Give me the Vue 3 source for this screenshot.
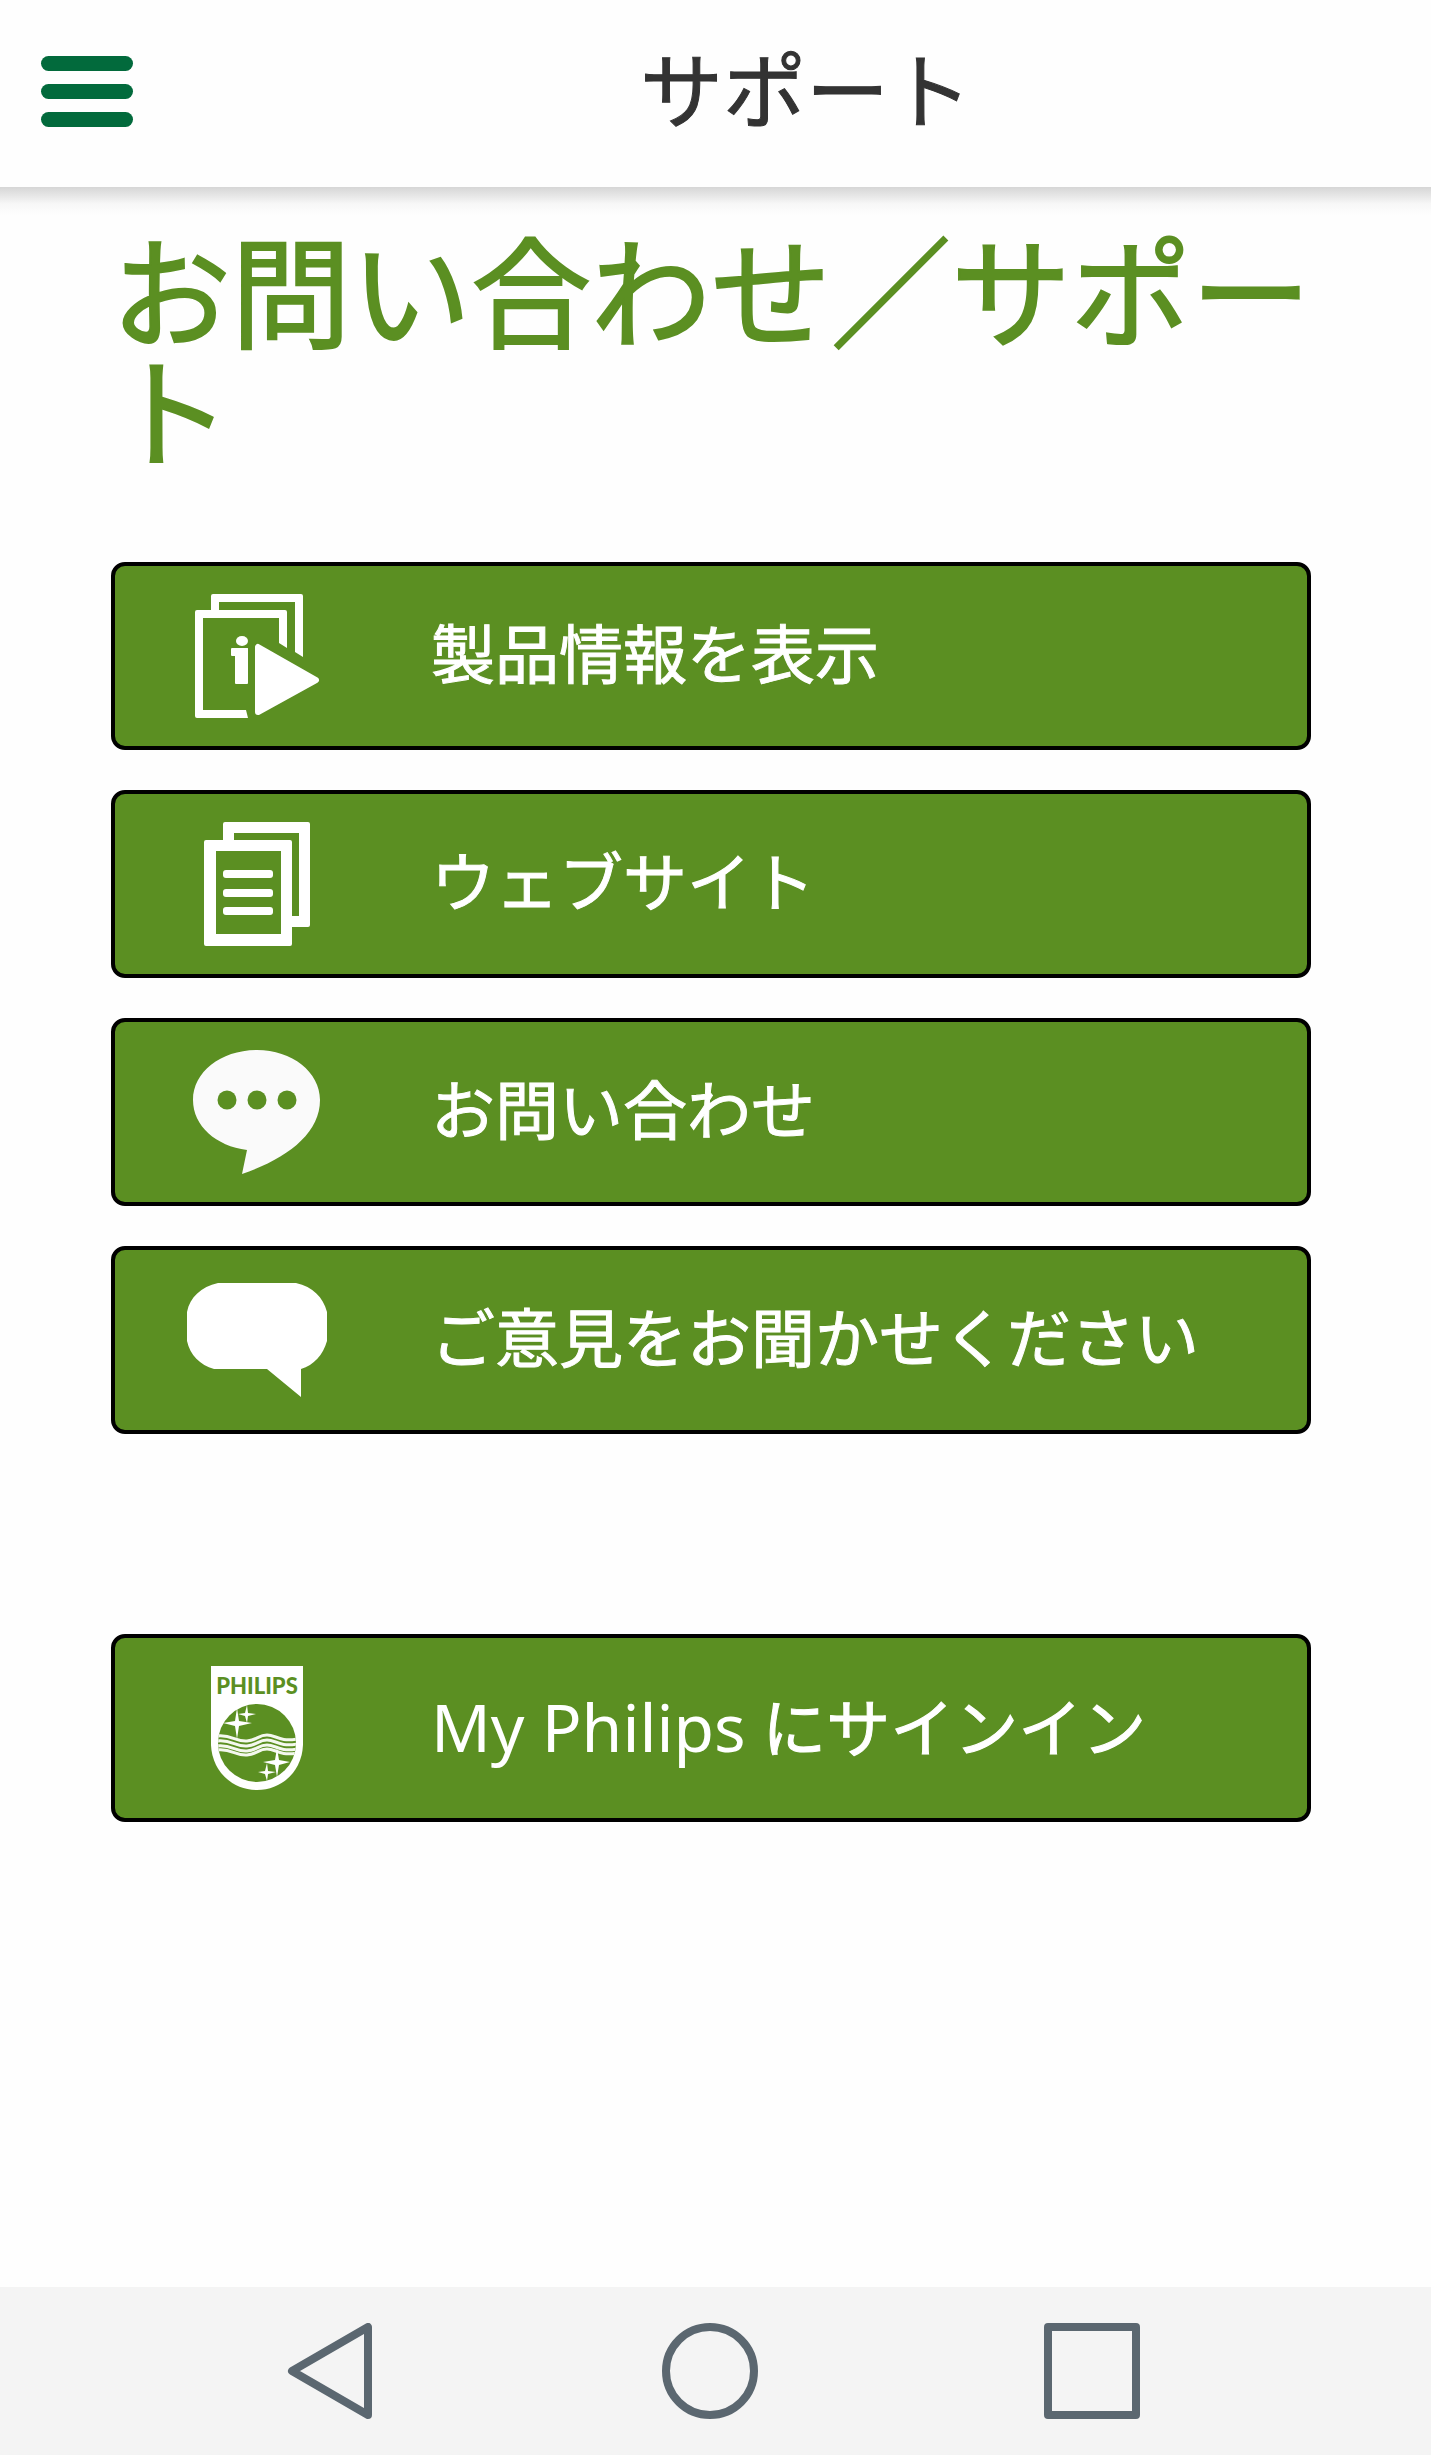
<template>
  <div class="screen">
    <header class="app-bar">
      <button class="menu-button" type="button" aria-label="メニュー">
        <span class="menu-line" />
        <span class="menu-line" />
        <span class="menu-line" />
      </button>
      <div class="app-title">サポート</div>
    </header>

    <main class="content">
      <h1 class="heading">お問い合わせ／サポート</h1>

      <nav class="actions">
        <button
          v-for="item in items"
          :key="item.icon"
          class="action"
          :class="{ separated: item.separated }"
          type="button"
        >
          <span class="action-icon">
            <svg viewBox="0 0 140 124" aria-hidden="true">
              <g v-if="item.icon === 'product'" fill="#fff">
                <path d="M24 17V2q0-2 2-2H114q2 0 2 2V63L108 58V8H32V17Z" />
                <path d="M8 18q0-2 2-2H98q2 0 2 2V54L92 49V24H16V116H59L61 124H10q-2 0-2-2Z" />
                <ellipse cx="55" cy="47" rx="6" ry="5" />
                <rect x="44" y="54" width="17" height="8" rx="1" />
                <rect x="48" y="54" width="13" height="36" rx="1" />
                <path
                  d="M71 53V118L129 86Z"
                  stroke="#fff"
                  stroke-width="6"
                  stroke-linejoin="round"
                />
              </g>
              <g v-else-if="item.icon === 'website'" fill="#fff">
                <path d="M36 20V2q0-2 2-2H121q2 0 2 2V103q0 2-2 2H104V94H112V11H47V20Z" />
                <path
                  fill-rule="evenodd"
                  d="M19 18H103q2 0 2 2V122q0 2-2 2H19q-2 0-2-2V20q0-2 2-2ZM29 29V112H94V29Z"
                />
                <rect x="36" y="48" width="50" height="8" rx="3" />
                <rect x="36" y="67" width="50" height="8" rx="3" />
                <rect x="36" y="85" width="50" height="8" rx="3" />
              </g>
              <g v-else-if="item.icon === 'contact'">
                <path
                  fill="#fafafa"
                  d="M70 0C105 0 133 22 133 50C133 84 99 109 55 124L60 100C29 96 6 76 6 50C6 22 34 0 70 0Z"
                />
                <circle cx="40" cy="50" r="9.5" fill="#5b8f22" />
                <circle cx="70" cy="50" r="9.5" fill="#5b8f22" />
                <circle cx="100" cy="50" r="9.5" fill="#5b8f22" />
              </g>
              <g v-else-if="item.icon === 'feedback'" fill="#fff">
                <path
                  d="M31 5H109C126 9 136 19 140 34V63C136 77 127 87 114 91V119L80 91H27C13 87 3 77 0 63V34C3 19 14 9 31 5Z"
                />
              </g>
              <g v-else>
                <clipPath id="emblem">
                  <circle cx="70" cy="77" r="39" />
                </clipPath>
                <path fill="#fff" d="M24 0H116V79C115 105 95 124 70 124S25 105 24 79Z" />
                <text x="70" y="28" class="shield-text">PHILIPS</text>
                <circle cx="70" cy="77" r="39" fill="#5b8f22" />
                <g clip-path="url(#emblem)" fill="none" stroke="#f4f8ee" stroke-width="3">
                  <path
                    v-for="y in [0, 5, 10, 14]"
                    :key="y"
                    :transform="`translate(0 ${y})`"
                    d="M30 70C44 68 49 76 60 75S71 69 80 69S92 76 110 73"
                  />
                </g>
                <g fill="#fff">
                  <path d="M50 42L52 55L65 57L52 60L50 73L48 60L36 57L48 55Z" />
                  <path d="M60 39L61 47L69 48L61 50L60 57L58 50L51 48L58 47Z" />
                  <path d="M90 82L92 94L103 96L92 99L90 111L88 99L76 96L88 94Z" />
                  <path d="M80 97L81 105L89 106L81 108L80 115L78 108L71 106L78 105Z" />
                </g>
              </g>
            </svg>
          </span>
          <span class="action-label"><span v-if="item.brand" class="brand">{{ item.brand }}</span>{{ item.label }}</span>
        </button>
      </nav>
    </main>

    <footer class="system-bar">
      <button class="system-button" type="button" aria-label="戻る">
        <svg viewBox="0 0 96 96" aria-hidden="true">
          <path d="M12 48L88 4V92Z" />
        </svg>
      </button>
      <button class="system-button" type="button" aria-label="ホーム">
        <svg viewBox="0 0 96 96" aria-hidden="true">
          <circle cx="48" cy="48" r="44" />
        </svg>
      </button>
      <button class="system-button" type="button" aria-label="履歴">
        <svg viewBox="0 0 96 96" aria-hidden="true">
          <rect x="4" y="4" width="88" height="88" />
        </svg>
      </button>
    </footer>
  </div>
</template>

<script setup>
const items = [
  { icon: 'product', label: '製品情報を表示' },
  { icon: 'website', label: 'ウェブサイト' },
  { icon: 'contact', label: 'お問い合わせ' },
  { icon: 'feedback', label: 'ご意見をお聞かせください' },
  { icon: 'account', brand: 'My Philips', label: ' にサインイン', separated: true },
];
</script>

<style>
body {
  margin: 0;
  background-color: #fefefe;
}
</style>

<style scoped>
.screen {
  display: flex;
  flex-direction: column;
  min-height: 100vh;
  font-family: "Noto Sans", "Noto Sans CJK JP", sans-serif;
}

button {
  margin: 0;
  padding: 0;
  border: none;
  background: none;
  font: inherit;
  cursor: pointer;
}

svg {
  display: block;
}

.app-bar {
  position: relative;
  display: flex;
  align-items: center;
  height: 187px;
  padding-left: 41px;
}

/* soft shadow under the bar */
.app-bar::after {
  content: "";
  position: absolute;
  top: 100%;
  left: 0;
  right: 0;
  height: 28px;
  background: linear-gradient(#d6d6d6, #e6e6e6 30%, #f7f7f7 60%, #fefefe);
}

.menu-button {
  display: flex;
  flex-direction: column;
  gap: 13px;
  width: 92px;
  padding-bottom: 4px;
}

.menu-line {
  height: 15px;
  border-radius: 8px;
  background-color: #026a3c;
}

.app-title {
  flex: 1;
  padding: 0 0 8px 48px;
  text-align: center;
  color: #333;
  font-size: 83px;
  line-height: 1;
  -webkit-text-stroke: 1px currentColor;
}

.content {
  flex: 1;
  padding: 46px 120px 48px 111px;
}

.heading {
  margin: 0 0 89px;
  color: #5b8f22;
  font-size: 120px;
  font-weight: 400;
  line-height: 1;
  line-break: anywhere;
  -webkit-text-stroke: 2px currentColor;
}

.actions {
  display: flex;
  flex-direction: column;
  gap: 40px;
}

.action {
  display: flex;
  align-items: center;
  gap: 32px;
  height: 188px;
  border: 4px solid #000;
  border-radius: 14px;
  background-color: #5b8f22;
  color: #fff;
  text-align: left;
}

.action.separated {
  margin-top: 160px;
}

.action-icon {
  display: flex;
  justify-content: center;
  width: 284px;
}

.action-icon svg {
  width: 140px;
  height: 124px;
}

.shield-text {
  fill: #5b8f22;
  font-family: Lato, sans-serif;
  font-size: 22px;
  font-weight: 900;
  text-anchor: middle;
}

.action-label {
  padding-bottom: 4px;
  font-size: 64px;
  line-height: 1;
  -webkit-text-stroke: 1px currentColor;
}

.brand {
  font-size: 66px;
  -webkit-text-stroke: 0;
}

.system-bar {
  display: grid;
  grid-template-columns: repeat(3, 1fr);
  align-items: center;
  height: 168px;
  padding: 0 148px 0 137px;
  background-color: #f4f4f4;
}

.system-button {
  justify-self: center;
}

.system-button svg {
  width: 96px;
  height: 96px;
  fill: none;
  stroke: #5b6770;
  stroke-width: 8;
  stroke-linejoin: round;
}
</style>
